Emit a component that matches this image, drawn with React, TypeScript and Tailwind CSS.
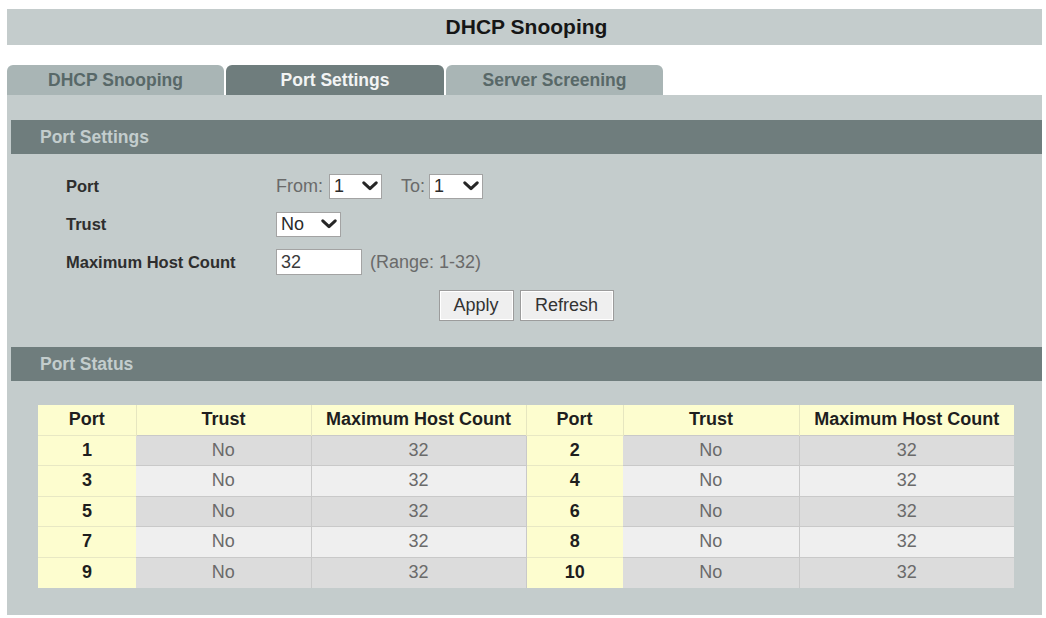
import React from "react";

const Chevron = () => (
  <svg width="16" height="10" viewBox="0 0 16 10" className="shrink-0">
    <path d="M1.8 1.8 L8 7.6 L14.2 1.8" fill="none" stroke="#262626" strokeWidth="3" strokeLinecap="round" strokeLinejoin="round" />
  </svg>
);

const FakeSelect = ({ value, width }: { value: string; width: string }) => (
  <div className={`${width} h-[25px] bg-white border border-[#a3a3a3] flex items-center justify-between pl-[4px] pr-[3px] text-[18px] leading-none text-[#2a2a2a]`}>
    <span>{value}</span>
    <Chevron />
  </div>
);

const SectionHeader = ({ title }: { title: string }) => (
  <div className="ml-[4px] h-[34px] bg-[#6f7d7d] flex items-center pl-[29px] text-[17.5px] font-bold text-[#c3cdcd]">
    {title}
  </div>
);

const rows = [
  [1, 2],
  [3, 4],
  [5, 6],
  [7, 8],
  [9, 10],
];

const App = () => {
  return (
    <div className="w-[1046px] h-[618px] bg-white pt-[9px] pl-[7px] font-['Liberation_Sans',Arial,sans-serif] overflow-hidden">
      <div className="w-[1035px]">
        <div className="h-[36px] bg-[#c4cccc] flex items-center justify-center pl-[4px] text-[21px] font-bold text-[#161616]">
          DHCP Snooping
        </div>

        <div className="mt-[20px] flex gap-[2px] h-[30px]">
          <div className="w-[217px] rounded-t-[6px] bg-[#a9b5b5] flex items-center justify-center text-[17.5px] font-bold text-[#586868]">
            DHCP Snooping
          </div>
          <div className="w-[218px] rounded-t-[6px] bg-[#6f7d7d] flex items-center justify-center text-[17.5px] font-bold text-[#f2f4f4]">
            Port Settings
          </div>
          <div className="w-[217px] rounded-t-[6px] bg-[#a9b5b5] flex items-center justify-center text-[17.5px] font-bold text-[#586868]">
            Server Screening
          </div>
        </div>

        <div className="bg-[#c4cccc] pt-[25px] pb-[27px]">
          <SectionHeader title="Port Settings" />

          <div className="pt-[13px] pl-[59px] grid grid-cols-[210px_auto] auto-rows-[38px] items-center text-[#2e2e2e]">
            <div className="text-[16.5px] font-bold">Port</div>
            <div className="flex items-center text-[18px] text-[#6a6a6a]">
              <span>From:</span>
              <div className="ml-[6px]">
                <FakeSelect value="1" width="w-[53px]" />
              </div>
              <span className="ml-[19px]">To:</span>
              <div className="ml-[4px]">
                <FakeSelect value="1" width="w-[54px]" />
              </div>
            </div>

            <div className="text-[16.5px] font-bold">Trust</div>
            <div className="flex items-center">
              <FakeSelect value="No" width="w-[65px]" />
            </div>

            <div className="text-[16.5px] font-bold">Maximum Host Count</div>
            <div className="flex items-center text-[18px] text-[#6a6a6a]">
              <div className="w-[86px] h-[26px] bg-white border border-[#a3a3a3] flex items-center pl-[4px] text-[#3a3a3a]">
                32
              </div>
              <span className="ml-[8px]">(Range: 1-32)</span>
            </div>
          </div>

          <div className="mt-[9px] flex justify-center gap-[6px] pl-[3px]">
            <button className="w-[75px] h-[31px] bg-[#efefef] border border-[#9c9c9c] shadow-[inset_0_0_0_1px_#ffffff] text-[18px] text-[#333]">
              Apply
            </button>
            <button className="w-[94px] h-[31px] bg-[#efefef] border border-[#9c9c9c] shadow-[inset_0_0_0_1px_#ffffff] text-[18px] text-[#333]">
              Refresh
            </button>
          </div>

          <div className="mt-[26px]">
            <SectionHeader title="Port Status" />
          </div>

          <div className="mt-[24px] ml-[31px]">
            <table className="border-collapse text-[18px]">
              <colgroup>
                <col className="w-[98px]" />
                <col className="w-[175px]" />
                <col className="w-[215px]" />
                <col className="w-[97px]" />
                <col className="w-[176px]" />
                <col className="w-[215px]" />
              </colgroup>
              <thead>
                <tr className="h-[30px] bg-[#fdfdcf] font-bold text-[#1e1e1e]">
                  <th className="border-r border-[#e6e6c0]">Port</th>
                  <th className="border-r border-[#e6e6c0]">Trust</th>
                  <th className="border-r border-[#e6e6c0]">Maximum Host Count</th>
                  <th className="border-r border-[#e6e6c0]">Port</th>
                  <th className="border-r border-[#e6e6c0]">Trust</th>
                  <th>Maximum Host Count</th>
                </tr>
              </thead>
              <tbody>
                {rows.map(([a, b], i) => {
                  const bg = i % 2 === 0 ? "bg-[#dcdcdc]" : "bg-[#efefef]";
                  return (
                    <tr key={a} className="h-[30.5px] text-center">
                      <td className="bg-[#fdfdcf] font-bold text-[#1e1e1e] border-t border-[#e8e8c4]">{a}</td>
                      <td className={`${bg} text-[#6a6a6a] border-t border-[#c9c9c9] border-r`}>No</td>
                      <td className={`${bg} text-[#6a6a6a] border-t border-[#c9c9c9] border-r`}>32</td>
                      <td className="bg-[#fdfdcf] font-bold text-[#1e1e1e] border-t border-[#e8e8c4]">{b}</td>
                      <td className={`${bg} text-[#6a6a6a] border-t border-[#c9c9c9] border-r`}>No</td>
                      <td className={`${bg} text-[#6a6a6a] border-t border-[#c9c9c9]`}>32</td>
                    </tr>
                  );
                })}
              </tbody>
            </table>
          </div>
        </div>
      </div>
    </div>
  );
};

export default App;
